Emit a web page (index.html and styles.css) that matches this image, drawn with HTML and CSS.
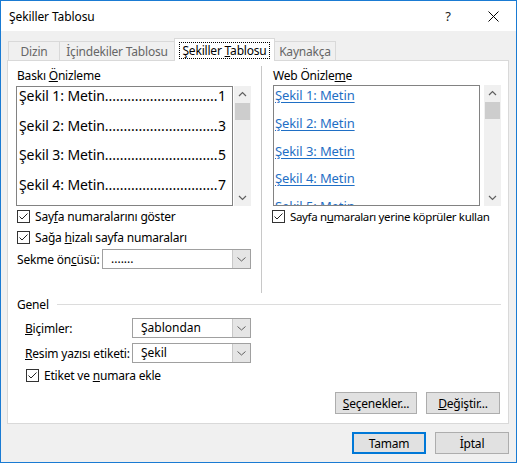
FILE: index.html
```html
<!DOCTYPE html>
<html lang="tr">
<head>
<meta charset="utf-8">
<title>Şekiller Tablosu</title>
<link rel="stylesheet" href="styles.css">
</head>
<body>
<div class="window">
  <div class="titlebar">
    <span class="title">Şekiller Tablosu</span>
    <span class="help">?</span>
    <span class="close"><svg width="11" height="11" viewBox="0 0 11 11"><path d="M0.5 0.5 L10.5 10.5 M10.5 0.5 L0.5 10.5" stroke="#000" stroke-width="1" fill="none"/></svg></span>
  </div>
  <div class="content">
    <div class="tabs">
      <div class="tab t1">Dizin</div>
      <div class="tab t2">İçindekiler Tablosu</div>
      <div class="tab selected"><span class="focus">Şekiller <u>T</u>ablosu</span></div>
      <div class="tab t4">Kaynakça</div>
    </div>
    <div class="panel">
      <div class="top">
        <div class="col left">
          <div class="label">Baskı <u>Ö</u>nizleme</div>
          <div class="preview">
            <div class="box print">
              <div class="pline"><span>Şekil 1: Metin</span><span class="dots">..............................</span><span>1</span></div>
              <div class="pline"><span>Şekil 2: Metin</span><span class="dots">..............................</span><span>3</span></div>
              <div class="pline"><span>Şekil 3: Metin</span><span class="dots">..............................</span><span>5</span></div>
              <div class="pline"><span>Şekil 4: Metin</span><span class="dots">..............................</span><span>7</span></div>
            </div>
            <div class="scrollbar">
              <svg class="arrow" width="17" height="17" viewBox="0 0 17 17"><path d="M5 10 L8.5 6.5 L12 10" stroke="#606060" stroke-width="1.2" fill="none"/></svg>
              <div class="thumb"></div>
              <div class="track"></div>
              <svg class="arrow" width="17" height="17" viewBox="0 0 17 17"><path d="M5 7 L8.5 10.5 L12 7" stroke="#606060" stroke-width="1.2" fill="none"/></svg>
            </div>
          </div>
          <div class="check r1">
            <svg class="cb" width="13" height="13" viewBox="0 0 13 13"><rect x="0.5" y="0.5" width="12" height="12" fill="#fff" stroke="#333"/><path d="M2.5 6.5 L5 9 L10.5 3.5" stroke="#222" stroke-width="1" fill="none"/></svg>
            <span>Say<u>f</u>a numaralarını göster</span>
          </div>
          <div class="check r2">
            <svg class="cb" width="13" height="13" viewBox="0 0 13 13"><rect x="0.5" y="0.5" width="12" height="12" fill="#fff" stroke="#333"/><path d="M2.5 6.5 L5 9 L10.5 3.5" stroke="#222" stroke-width="1" fill="none"/></svg>
            <span>Sağa <u>h</u>izalı sayfa numaraları</span>
          </div>
          <div class="field sekme">
            <span class="flabel">Sekme ön<u>c</u>üsü:</span>
            <div class="combo wide">
              <span class="cval">.......</span>
              <span class="cbtn"><svg width="17" height="18" viewBox="0 0 17 18"><path d="M4.5 7.5 L8.5 11 L12.5 7.5" stroke="#606060" stroke-width="1" fill="none"/></svg></span>
            </div>
          </div>
        </div>
        <div class="vsep"></div>
        <div class="col right">
          <div class="label">Web Önizle<u>m</u>e</div>
          <div class="preview">
            <div class="box web">
              <div class="wline"><a>Şekil 1: Metin</a></div>
              <div class="wline"><a>Şekil 2: Metin</a></div>
              <div class="wline"><a>Şekil 3: Metin</a></div>
              <div class="wline"><a>Şekil 4: Metin</a></div>
              <div class="wline"><a>Şekil 5: Metin</a></div>
            </div>
            <div class="scrollbar">
              <svg class="arrow" width="17" height="17" viewBox="0 0 17 17"><path d="M5 10 L8.5 6.5 L12 10" stroke="#606060" stroke-width="1.2" fill="none"/></svg>
              <div class="thumb"></div>
              <div class="track"></div>
              <svg class="arrow" width="17" height="17" viewBox="0 0 17 17"><path d="M5 7 L8.5 10.5 L12 7" stroke="#606060" stroke-width="1.2" fill="none"/></svg>
            </div>
          </div>
          <div class="check rc">
            <svg class="cb" width="13" height="13" viewBox="0 0 13 13"><rect x="0.5" y="0.5" width="12" height="12" fill="#fff" stroke="#333"/><path d="M2.5 6.5 L5 9 L10.5 3.5" stroke="#222" stroke-width="1" fill="none"/></svg>
            <span class="rctext">Sayfa n<u>u</u>maraları yerine köprüler kullan</span>
          </div>
        </div>
      </div>
      <div class="genel">
        <span>Genel</span>
        <div class="hline"></div>
      </div>
      <div class="field gf g1">
        <span class="flabel glabel"><u>B</u>içimler:</span>
        <div class="combo narrow">
          <span class="cval">Şablondan</span>
          <span class="cbtn"><svg width="17" height="18" viewBox="0 0 17 18"><path d="M4.5 7.5 L8.5 11 L12.5 7.5" stroke="#606060" stroke-width="1" fill="none"/></svg></span>
        </div>
      </div>
      <div class="field gf g2">
        <span class="flabel glabel"><u>R</u>esim yazısı etiketi:</span>
        <div class="combo narrow">
          <span class="cval">Şekil</span>
          <span class="cbtn"><svg width="17" height="18" viewBox="0 0 17 18"><path d="M4.5 7.5 L8.5 11 L12.5 7.5" stroke="#606060" stroke-width="1" fill="none"/></svg></span>
        </div>
      </div>
      <div class="check g3">
        <svg class="cb" width="13" height="13" viewBox="0 0 13 13"><rect x="0.5" y="0.5" width="12" height="12" fill="#fff" stroke="#333"/><path d="M2.5 6.5 L5 9 L10.5 3.5" stroke="#222" stroke-width="1" fill="none"/></svg>
        <span>Etiket ve <u>n</u>umara ekle</span>
      </div>
      <div class="panel-buttons">
        <button class="btn b-sec"><u>S</u>eçenekler...</button>
        <button class="btn b-deg"><u>D</u>eğiştir...</button>
      </div>
    </div>
    <div class="footer">
      <button class="btn default">Tamam</button>
      <button class="btn">İptal</button>
    </div>
  </div>
</div>
</body>
</html>
```

FILE: styles.css
```css
* { box-sizing: border-box; }
html, body { margin: 0; padding: 0; background: #fff; }
body { font-family: "Noto Sans", "Open Sans", sans-serif; font-size: 12px; color: #000; }
u { text-decoration: underline; text-underline-offset: 1px; }

.window {
  width: 517px; height: 463px;
  border: 1px solid #1a7bd3;
  background: #f0f0f0;
  display: flex; flex-direction: column;
}
.titlebar {
  height: 30px; background: #fff;
  display: flex; align-items: center;
  padding-left: 8px;
}
.title { font-size: 12px; letter-spacing: -0.1px; }
.help { margin-left: auto; font-size: 13px; color: #222; margin-right: 37px; }
.close { width: 11px; height: 11px; margin-right: 17px; display: flex; }

.content { padding: 7px 7px 0 6px; display: flex; flex-direction: column; flex: 1; }

.tabs { display: flex; align-items: flex-end; padding-left: 1px; }
.tab {
  height: 19px; background: #f0f0f0;
  border: 1px solid #d9d9d9; border-bottom: none;
  color: #666; font-size: 12px;
  display: flex; align-items: center; justify-content: center;
  margin-right: -1px; letter-spacing: -0.2px;
}
.t1 { width: 52px; }
.t2 { width: 116px; }
.t4 { width: 62px; }
.tab.selected {
  height: 23px; margin-bottom: -1px; background: #fff; color: #000;
  width: 101px; position: relative; z-index: 1; margin-right: -1px;
  align-items: flex-start; padding-top: 3px;
}
.focus { border: 1px dotted #000; padding: 0 2px; line-height: 15px; }

.panel {
  height: 364px; background: #fff;
  border: 1px solid #d9d9d9;
  display: flex; flex-direction: column;
  padding: 0 7px 0 8px;
}
.top { display: flex; height: 232px; }
.col { display: flex; flex-direction: column; padding-top: 7px; }
.left { width: 235px; }
.right { width: 228px; padding-top: 7px; }
.vsep { width: 1px; background: #c8c8c8; margin: 5px 11px 0 10px; }

.label { line-height: 16px; height: 16px; margin-bottom: 2px; letter-spacing: -0.2px; padding-left: 1px; }
.right .label { margin-bottom: 1px; padding-left: 0; }

.preview { display: flex; height: 120px; }
.right .preview { height: 121px; }
.box {
  flex: 1; border: 1px solid #828282; background: #fff; overflow: hidden;
}
.print { padding: 0 6px 0 2px; }
.pline {
  display: flex;
  height: 29.5px; font-size: 14px; line-height: 18px;
  white-space: nowrap; letter-spacing: -0.1px;
}
.dots { flex: 1; text-align: left; letter-spacing: 0; }
.web { padding: 0 0 0 1px; }
.wline { height: 27.8px; font-size: 13px; line-height: 18px; white-space: nowrap; }
.wline a { color: #1f6fc5; text-decoration: underline; text-underline-offset: 2px; letter-spacing: -0.1px; }

.scrollbar { width: 17px; margin-left: 1px; background: #f0f0f0; display: flex; flex-direction: column; }
.right .scrollbar { margin-left: 4px; }
.arrow { display: block; }
.thumb { height: 17px; background: #cdcdcd; margin: 0 1px; }
.track { flex: 1; }

.check { display: flex; align-items: center; height: 16px; gap: 5px; letter-spacing: -0.2px; white-space: nowrap; }
.cb { display: block; flex: none; }
.r1 { margin-top: 2px; padding-left: 1px; }
.r2 { margin-top: 5px; padding-left: 1px; }
.rc { margin-top: 2px; margin-left: -1px; }
.rctext { font-size: 11.5px; letter-spacing: -0.35px; }

.field { display: flex; align-items: center; }
.sekme { margin-top: 4px; }
.flabel { width: 86px; padding-left: 1px; letter-spacing: -0.2px; }
.combo {
  height: 20px; border: 1px solid #a0a0a0; background: #fff;
  display: flex; align-items: stretch;
}
.wide { width: 149px; }
.narrow { width: 119px; }
.cval { flex: 1; padding-left: 8px; line-height: 18px; }
.cbtn { width: 18px; background: #e5e5e5; border-left: 1px solid #c8c8c8; display: flex; }

.genel { display: flex; align-items: center; height: 16px; margin-top: 3px; padding-left: 1px; }
.genel span { letter-spacing: -0.2px; }
.hline { flex: 1; height: 1px; background: #dcdcdc; margin-left: 8px; margin-right: 0; }

.gf { padding-left: 9px; }
.glabel { width: 107px; padding-left: 0; }
.g1 { margin-top: 6px; }
.g2 { margin-top: 5px; }
.g3 { margin-top: 4px; padding-left: 10px; }

.btn {
  height: 22px; background: #e1e1e1; border: 1px solid #adadad;
  font-family: "Noto Sans", "Open Sans", sans-serif; font-size: 12px; color: #000;
  padding: 0; letter-spacing: -0.2px;
}
.panel-buttons { margin-top: auto; padding-bottom: 9px; display: flex; justify-content: flex-end; gap: 9px; padding-right: 1px; }
.b-sec { width: 82px; }
.b-deg { width: 74px; }

.footer { display: flex; justify-content: flex-end; gap: 9px; margin-top: 8px; }
.footer .btn { width: 74px; }
.btn.default { border: 2px solid #0078d7; }
```
